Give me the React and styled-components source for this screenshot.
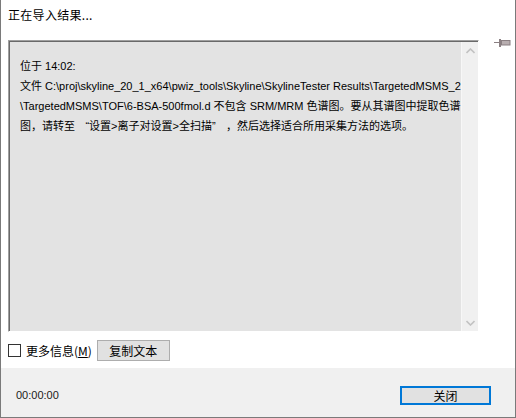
import React from "react";
import styled, { createGlobalStyle } from "styled-components";

const GlobalStyle = createGlobalStyle`
  * {
    box-sizing: border-box;
    margin: 0;
    padding: 0;
  }
  body {
    margin: 0;
    background: #ffffff;
    font-family: "Liberation Sans", "Noto Sans CJK SC", sans-serif;
    color: #000;
  }
`;

function Chevron({ up }) {
  return (
    <svg width="9" height="6" viewBox="0 0 9 6">
      <path
        d={up ? "M0.5 5 L4.5 1 L8.5 5" : "M0.5 1 L4.5 5 L8.5 1"}
        fill="none"
        stroke="#c2c2c2"
        strokeWidth="1.6"
      />
    </svg>
  );
}

function PinIcon() {
  return (
    <svg width="17" height="8" viewBox="0 0 17 8">
      <line x1="0" y1="3.5" x2="6" y2="3.5" stroke="#8a7f82" strokeWidth="1" />
      <rect x="5" y="0" width="2" height="8" fill="#8a7f82" />
      <rect x="7.5" y="1.5" width="8.5" height="4.5" fill="#b8aeb0" stroke="#8a7f82" strokeWidth="1" />
    </svg>
  );
}

function App() {
  return (
    <>
      <GlobalStyle />
      <Window>
        <Title>正在导入结果...</Title>
        <Body>
          <TextBox>
            <TextContent>
              <Line>位于 14:02:</Line>
              <Line>
                文件 C:\proj\skyline_20_1_x64\pwiz_tools\Skyline\SkylineTester Results\TargetedMSMS_2
              </Line>
              <Line>
                \TargetedMSMS\TOF\6-BSA-500fmol.d 不包含 SRM/MRM 色谱图。要从其谱图中提取色谱
              </Line>
              <Line>
                图，请转至 <Quote $align="right">“</Quote>设置&gt;离子对设置&gt;全扫描
                <Quote $align="left">”</Quote> ，然后选择适合所用采集方法的选项。
              </Line>
            </TextContent>
            <ScrollBar>
              <ArrowCell>
                <Chevron up />
              </ArrowCell>
              <ArrowCell>
                <Chevron />
              </ArrowCell>
            </ScrollBar>
          </TextBox>
          <PinSlot>
            <PinIcon />
          </PinSlot>
        </Body>
        <Actions>
          <CheckLabel>
            <CheckBox />
            <span>
              更多信息(<u>M</u>)
            </span>
          </CheckLabel>
          <Button $width={73} $height={21}>
            复制文本
          </Button>
        </Actions>
        <Footer>
          <Timer>00:00:00</Timer>
          <Button $width={91} $height={19} $default>
            关闭
          </Button>
        </Footer>
      </Window>
    </>
  );
}

const Window = styled.div`
  width: 516px;
  height: 418px;
  background: #ffffff;
  border: 1px solid #7a7a7a;
  border-top: none;
  display: flex;
  flex-direction: column;
`;

const Title = styled.div`
  height: 40px;
  padding: 7px 0 0 7px;
  font-family: "Noto Sans CJK SC", sans-serif;
  font-size: 12px;
  line-height: 16px;
  letter-spacing: 0.3px;
  color: #000;
`;

const Body = styled.div`
  display: flex;
  align-items: flex-start;
  padding-left: 7px;
`;

const TextBox = styled.div`
  width: 471px;
  height: 292px;
  display: flex;
  background: #e3e3e3;
  border-top: 1px solid #a0a0a0;
  border-left: 1px solid #a0a0a0;
  border-right: 1px solid #ffffff;
  border-bottom: 1px solid #ffffff;
  box-shadow: inset 1px 1px 0 #696969;
`;

const TextContent = styled.div`
  flex: 1;
  padding: 15px 0 0 11px;
  font-size: 11px;
  line-height: 20px;
  color: #000;
`;

const Line = styled.div`
  white-space: nowrap;
`;

const Quote = styled.span`
  display: inline-block;
  width: 11px;
  text-align: ${(p) => p.$align};
`;

const ScrollBar = styled.div`
  width: 17px;
  margin-top: 1px;
  background: #f0f0f0;
  border-left: 1px solid #f7f7f7;
  display: flex;
  flex-direction: column;
  justify-content: space-between;
`;

const ArrowCell = styled.div`
  height: 17px;
  display: flex;
  align-items: center;
  justify-content: center;
`;

const PinSlot = styled.div`
  margin: -1px 0 0 15px;
  width: 17px;
  height: 8px;
  display: flex;
`;

const Actions = styled.div`
  height: 36px;
  display: flex;
  align-items: flex-start;
  gap: 5px;
  padding: 8px 0 0 7px;
`;

const CheckLabel = styled.label`
  display: flex;
  align-items: center;
  gap: 5px;
  height: 21px;
  font-family: "Noto Sans CJK SC", sans-serif;
  font-size: 12px;
  color: #000;
  u {
    text-decoration: underline;
  }
`;

const CheckBox = styled.span`
  width: 13px;
  height: 13px;
  border: 1px solid #333333;
  background: #ffffff;
`;

const Button = styled.div`
  width: ${(p) => p.$width}px;
  height: ${(p) => p.$height}px;
  display: flex;
  align-items: center;
  justify-content: center;
  background: #e1e1e1;
  border: ${(p) => (p.$default ? "2px solid #0078d7" : "1px solid #adadad")};
  font-family: "Noto Sans CJK SC", sans-serif;
  font-size: 12px;
  color: #000;
`;

const Footer = styled.div`
  flex: 1;
  background: #f0f0f0;
  display: flex;
  align-items: center;
  justify-content: space-between;
  padding: 5px 24px 0 15px;
`;

const Timer = styled.div`
  font-size: 11px;
  color: #1a1a1a;
`;

export default App;
